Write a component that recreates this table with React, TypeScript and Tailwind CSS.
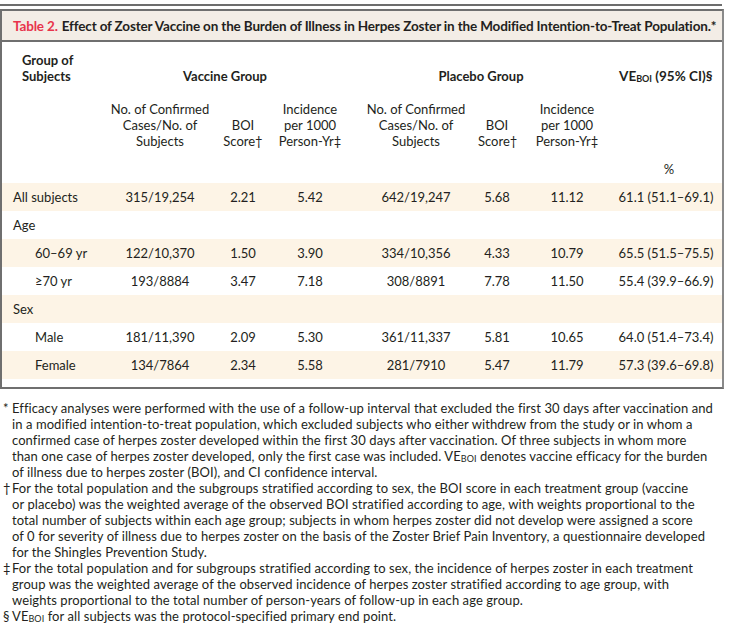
const rows = [
    { label: "All subjects", indent: false, shade: true, v: ["315/19,254", "2.21", "5.42", "642/19,247", "5.68", "11.12", "61.1 (51.1–69.1)"] },
    { label: "Age", indent: false, shade: false, v: null },
    { label: "60–69 yr", indent: true, shade: true, v: ["122/10,370", "1.50", "3.90", "334/10,356", "4.33", "10.79", "65.5 (51.5–75.5)"] },
    { label: "≥70 yr", indent: true, shade: false, v: ["193/8884", "3.47", "7.18", "308/8891", "7.78", "11.50", "55.4 (39.9–66.9)"] },
    { label: "Sex", indent: false, shade: true, v: null },
    { label: "Male", indent: true, shade: false, v: ["181/11,390", "2.09", "5.30", "361/11,337", "5.81", "10.65", "64.0 (51.4–73.4)"] },
    { label: "Female", indent: true, shade: true, v: ["134/7864", "2.34", "5.58", "281/7910", "5.47", "11.79", "57.3 (39.6–69.8)"] },
]

const grid = "grid grid-cols-[98px_120px_46px_88px_124px_38px_102px_96px]"

const VE = () => (
    <span>VE<sub className="text-[9px] relative top-[1px] align-baseline">BOI</sub></span>
)

const notes = [
    { mark: "*", lines: [
        <>Efficacy analyses were performed with the use of a follow-up interval that excluded the first 30 days after vaccination and</>,
        <>in a modified intention-to-treat population, which excluded subjects who either withdrew from the study or in whom a</>,
        <>confirmed case of herpes zoster developed within the first 30 days after vaccination. Of three subjects in whom more</>,
        <>than one case of herpes zoster developed, only the first case was included. <VE /> denotes vaccine efficacy for the burden</>,
        <>of illness due to herpes zoster (BOI), and CI confidence interval.</>,
    ] },
    { mark: "†", lines: [
        <>For the total population and the subgroups stratified according to sex, the BOI score in each treatment group (vaccine</>,
        <>or placebo) was the weighted average of the observed BOI stratified according to age, with weights proportional to the</>,
        <>total number of subjects within each age group; subjects in whom herpes zoster did not develop were assigned a score</>,
        <>of 0 for severity of illness due to herpes zoster on the basis of the Zoster Brief Pain Inventory, a questionnaire developed</>,
        <>for the Shingles Prevention Study.</>,
    ] },
    { mark: "‡", lines: [
        <>For the total population and for subgroups stratified according to sex, the incidence of herpes zoster in each treatment</>,
        <>group was the weighted average of the observed incidence of herpes zoster stratified according to age group, with</>,
        <>weights proportional to the total number of person-years of follow-up in each age group.</>,
    ] },
    { mark: "§", lines: [
        <><VE /> for all subjects was the protocol-specified primary end point.</>,
    ] },
]

export default function App() {
    return (
        <div className="w-[730px] h-[630px] bg-white text-[#231f20] font-['Lato',sans-serif] text-[13px] leading-[16px]">
            <div className="pt-[4px] pr-[8px]">
                <div className="h-[2px] bg-[#6d6d6d]" />
            </div>
            <div className="mt-[3px] w-[724px] border-2 border-[#6f6f6f] border-r-[#8a8a8a]">
                <div className="h-[31px] bg-[#f3ede6] border-b-2 border-[#6f6f6f] flex items-center pl-[11px] font-bold text-[13.5px] tracking-[-0.16px] whitespace-nowrap">
                    <span className="text-[#e8344c]">Table 2.</span>
                    <span className="ml-[4px]">Effect of Zoster Vaccine on the Burden of Illness in Herpes Zoster in the Modified Intention-to-Treat Population.*</span>
                </div>

                <div className={`${grid} pt-[10px] font-bold`}>
                    <div className="pl-[20px]">Group of<br />Subjects</div>
                    <div className="col-span-3 text-center self-end pr-[4px]">Vaccine Group</div>
                    <div className="col-span-3 text-center self-end pr-[10px]">Placebo Group</div>
                    <div className="self-end pl-[1px] whitespace-nowrap text-[13.5px]"><VE /> (95% CI)§</div>
                </div>

                <div className={`${grid} mt-[17px] text-center`}>
                    <div />
                    <div>No. of Confirmed<br />Cases/No. of<br />Subjects</div>
                    <div className="self-end">BOI<br />Score†</div>
                    <div>Incidence<br />per 1000<br />Person-Yr‡</div>
                    <div>No. of Confirmed<br />Cases/No. of<br />Subjects</div>
                    <div className="self-end">BOI<br />Score†</div>
                    <div>Incidence<br />per 1000<br />Person-Yr‡</div>
                    <div />
                </div>

                <div className={`${grid} mt-[12px] mb-[6px] text-center`}>
                    <div className="col-start-8 pl-[6px]">%</div>
                </div>

                <div className="pb-[8px]">
                    {rows.map((r) => (
                        <div key={r.label} className={`${grid} h-[28px] items-center ${r.shade ? "bg-[#fdf4e6]" : ""}`}>
                            <div className={r.indent ? "pl-[33px]" : "pl-[11px]"}>{r.label}</div>
                            {r.v && r.v.map((x, i) => (
                                <div key={i} className="text-center">{x}</div>
                            ))}
                        </div>
                    ))}
                </div>
            </div>

            <div className="mt-[11px] whitespace-nowrap tracking-[0.08px]">
                {notes.map((n) => (
                    <div key={n.mark} className="flex">
                        <div className="w-[12px] pl-[3px]">{n.mark}</div>
                        <div>
                            {n.lines.map((l, i) => (
                                <div key={i}>{l}</div>
                            ))}
                        </div>
                    </div>
                ))}
            </div>
        </div>
    )
}
